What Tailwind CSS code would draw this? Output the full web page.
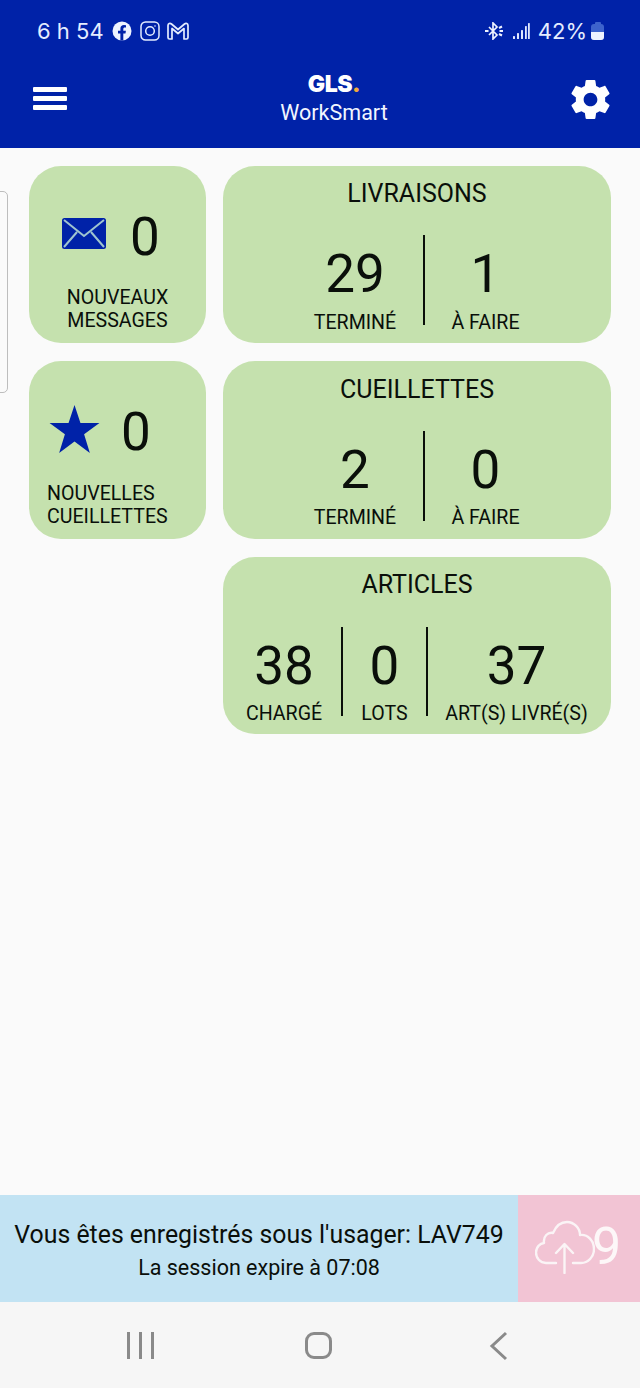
<!DOCTYPE html>
<html lang="fr">
<head>
    <meta charset="UTF-8">
    <meta name="viewport" content="width=device-width, initial-scale=1.0">
    <title>WorkSmart</title>
    <script src="https://cdn.jsdelivr.net/npm/@tailwindcss/browser@4"></script>
</head>
<body class="font-['Roboto',sans-serif] bg-[#fafafa] text-[#0a0f0a]">
<div class="relative flex flex-col w-[640px] h-[1388px] overflow-hidden">

    <!-- barre du haut -->
    <header class="h-[148px] bg-[#0022a8] text-white shrink-0">
        <div class="flex items-center justify-between h-[62px] pl-[37px] pr-[36px]">
            <div class="flex items-center">
                <span class="font-['Inter',sans-serif] text-[22px] leading-none text-[#e4edff] w-[76px]">6 h 54</span>
                <svg class="w-[20px] h-[20px] ml-[-1px]" viewBox="0 0 20 20"><circle cx="10" cy="10" r="9.5" fill="#eef3ff"/><path d="M8.4 19.5v-7H6v-2.7h2.4V7.7c0-2.4 1.4-3.7 3.6-3.7l2 .2v2.3h-1.2c-1.1 0-1.5.7-1.5 1.4v1.900h2.600l-.4 2.700h-2.200v7z" fill="#0022a8"/></svg>
                <svg class="w-[20px] h-[20px] ml-[8px]" viewBox="0 0 20 20" fill="none" stroke="#e4edff" stroke-width="1.500"><rect x="1" y="1" width="18" height="18" rx="4.500"/><circle cx="10" cy="10" r="4.300"/><circle cx="15" cy="5" r=".8" fill="#e4edff" stroke="none"/></svg>
                <svg class="w-[22px] h-[18px] ml-[7px]" viewBox="0 0 22 18" fill="none" stroke="#e4edff" stroke-width="1.700" stroke-linejoin="round"><path d="M1 3.500C1 1.500 3 .8 4.500 2L11 7.500 17.500 2C19 .8 21 1.500 21 3.500V15.500c0 1-.7 1.500-1.500 1.500H17V6.500L11 11.500 5 6.500V17H2.500C1.700 17 1 16.500 1 15.500z"/></svg>
            </div>
            <div class="flex items-center">
                <svg class="w-[18px] h-[18px]" viewBox="0 0 18 18" fill="none" stroke="#eef3ff" stroke-width="1.700"><path d="M4 5l8 8-4 4V1l4 4-8 8"/><path d="M0 9h3.500M14.500 9H18M14 6l3-1.500M14 12l3 1.500" stroke-width="2"/></svg>
                <svg class="w-[17px] h-[18px] ml-[10px]" viewBox="0 0 17 18" fill="#dfe8ff"><rect x="0" y="14" width="2" height="3" rx=".6"/><rect x="4" y="11" width="2" height="6" rx=".6"/><rect x="8" y="8" width="2" height="9" rx=".6"/><rect x="12" y="4" width="1.800" height="13" rx=".6"/><rect x="15" y="1" width="1.800" height="16" rx=".6"/></svg>
                <span class="font-['Inter',sans-serif] text-[22px] leading-none text-[#e4edff] ml-[8px]">42%</span>
                <div class="flex flex-col items-center ml-[4px]">
                    <div class="w-[6px] h-[2px] rounded-t-[1px] bg-[#3d63cc]"></div>
                    <div class="w-[13px] h-[16px] rounded-[3px] bg-[#3d63cc] flex flex-col justify-end overflow-hidden">
                        <div class="h-[8px] bg-[#eef3ff]"></div>
                    </div>
                </div>
            </div>
        </div>
        <div class="relative flex items-center justify-between h-[86px] pl-[33px] pr-[26px]">
            <div class="flex flex-col gap-[4px] w-[34px] pb-[14px]">
                <div class="h-[5px] rounded-[1px] bg-white"></div>
                <div class="h-[5px] rounded-[1px] bg-white"></div>
                <div class="h-[5px] rounded-[1px] bg-white"></div>
            </div>
            <div class="flex flex-col items-center pb-[10px] pl-[34px]">
                <div class="font-['Inter',sans-serif] font-black text-[23px] leading-[22px] tracking-[-0.5px] text-white">GLS<span class="text-[#f2a93b]">.</span></div>
                <div class="text-[21.5px] leading-[30px] mt-[3px] text-[#f2f6ff]">WorkSmart</div>
            </div>
            <svg class="w-[47px] h-[47px] mb-[12px]" viewBox="0 0 24 24" fill="#fff"><path fill-rule="evenodd" d="M19.430 12.980c.04-.32.07-.64.07-.98s-.03-.66-.07-.98l2.110-1.650c.19-.15.240-.42.120-.64l-2-3.460c-.12-.22-.39-.3-.61-.22l-2.490 1c-.52-.4-1.080-.73-1.690-.98l-.38-2.650C14.460 2.180 14.250 2 14 2h-4c-.25 0-.46.180-.49.420l-.38 2.650c-.61.25-1.170.59-1.690.98l-2.490-1c-.23-.09-.49 0-.61.220l-2 3.460c-.13.220-.07.490.12.640l2.110 1.650c-.04.320-.07.650-.07.980s.03.660.07.980l-2.110 1.650c-.19.150-.24.420-.12.640l2 3.460c.12.220.39.300.61.220l2.490-1c.52.400 1.080.730 1.690.980l.38 2.650c.03.240.24.420.49.420h4c.25 0 .46-.180.49-.420l.38-2.650c.61-.250 1.170-.590 1.690-.980l2.490 1c.23.090.49 0 .61-.220l2-3.460c.12-.220.07-.490-.12-.640l-2.110-1.650zM12 15.500c-1.930 0-3.500-1.570-3.500-3.500s1.570-3.500 3.500-3.500 3.500 1.570 3.500 3.500-1.570 3.500-3.500 3.500z"/></svg>
        </div>
    </header>

    <!-- poignee du menu lateral -->
    <div class="absolute left-[-10px] top-[191px] w-[18px] h-[202px] rounded-[5px] border border-[#bdbdbd]"></div>

    <!-- tuiles -->
    <main class="flex-1 flex gap-[17px] pl-[29px] pt-[18px]">
        <div class="flex flex-col gap-[18px] w-[177px]">
            <div class="h-[177px] rounded-[32px] bg-[#c5e1ae] flex flex-col items-center">
                <div class="flex items-center self-start h-[113px] pt-[29px] pl-[33px]">
                    <svg class="w-[44px] h-[31px] mb-[8px]" viewBox="0 0 44 31"><rect width="44" height="31" rx="2.500" fill="#0022a8"/><path d="M2 2l20 16L42 2M2 29l13-15M42 29L29 14" fill="none" stroke="#9fc4cf" stroke-width="2"/></svg>
                    <span class="text-[53px] leading-none ml-[24px]">0</span>
                </div>
                <div class="text-[19.6px] leading-[23px] text-center pt-[7px]">NOUVEAUX<br>MESSAGES</div>
            </div>
            <div class="h-[178px] rounded-[32px] bg-[#c5e1ae] flex flex-col pl-[18px]">
                <div class="flex items-center h-[113px] pt-[29px]">
                    <svg class="w-[51px] h-[48px] ml-[2px] mb-[6px]" viewBox="0 0 52 50"><path d="M26 0l6.200 18.800H52L36 30.500 42 50 26 38 10 50l6-19.500L0 18.800h19.800z" fill="#0022a8"/></svg>
                    <span class="text-[53px] leading-none ml-[21px]">0</span>
                </div>
                <div class="text-[19.6px] leading-[23px] pt-[8px]">NOUVELLES<br>CUEILLETTES</div>
            </div>
        </div>

        <div class="flex flex-col gap-[18px] w-[388px]">
            <div class="h-[177px] rounded-[32px] bg-[#c5e1ae] flex flex-col">
                <div class="text-[25px] leading-[28px] text-center pt-[14px]">LIVRAISONS</div>
                <div class="flex mt-[27px] h-[90px]">
                    <div class="w-[202px] border-r-2 border-[#0a0f0a] flex flex-col items-center pl-[64px]">
                        <span class="text-[53px] leading-[58px] mt-[10px]">29</span>
                        <span class="text-[19.6px] leading-[24px] mt-[8px] whitespace-nowrap">TERMINÉ</span>
                    </div>
                    <div class="flex-1 flex flex-col items-center pr-[65px]">
                        <span class="text-[53px] leading-[58px] mt-[10px]">1</span>
                        <span class="text-[19.6px] leading-[24px] mt-[8px] whitespace-nowrap">À FAIRE</span>
                    </div>
                </div>
            </div>
            <div class="h-[178px] rounded-[32px] bg-[#c5e1ae] flex flex-col">
                <div class="text-[25px] leading-[28px] text-center pt-[15px]">CUEILLETTES</div>
                <div class="flex mt-[27px] h-[90px]">
                    <div class="w-[202px] border-r-2 border-[#0a0f0a] flex flex-col items-center pl-[64px]">
                        <span class="text-[53px] leading-[58px] mt-[10px]">2</span>
                        <span class="text-[19.6px] leading-[24px] mt-[7px] whitespace-nowrap">TERMINÉ</span>
                    </div>
                    <div class="flex-1 flex flex-col items-center pr-[65px]">
                        <span class="text-[53px] leading-[58px] mt-[10px]">0</span>
                        <span class="text-[19.6px] leading-[24px] mt-[7px] whitespace-nowrap">À FAIRE</span>
                    </div>
                </div>
            </div>
            <div class="h-[177px] rounded-[32px] bg-[#c5e1ae] flex flex-col">
                <div class="text-[25px] leading-[28px] text-center pt-[14px]">ARTICLES</div>
                <div class="flex mt-[28px] h-[89px]">
                    <div class="w-[120px] border-r-2 border-[#0a0f0a] flex flex-col items-center pl-[4px]">
                        <span class="text-[53px] leading-[58px] mt-[10px]">38</span>
                        <span class="text-[19.6px] leading-[24px] mt-[7px] whitespace-nowrap">CHARGÉ</span>
                    </div>
                    <div class="w-[85px] border-r-2 border-[#0a0f0a] flex flex-col items-center">
                        <span class="text-[53px] leading-[58px] mt-[10px]">0</span>
                        <span class="text-[19.6px] leading-[24px] mt-[7px] whitespace-nowrap">LOTS</span>
                    </div>
                    <div class="flex-1 flex flex-col items-center pr-[6px]">
                        <span class="text-[53px] leading-[58px] mt-[10px]">37</span>
                        <span class="text-[19.6px] leading-[24px] mt-[7px] whitespace-nowrap">ART(S) LIVRÉ(S)</span>
                    </div>
                </div>
            </div>
        </div>
    </main>

    <!-- session -->
    <div class="flex h-[107px] shrink-0">
        <div class="w-[518px] bg-[#c2e3f3] flex flex-col items-center pt-[23px]">
            <div class="text-[24.85px] leading-[34px]">Vous êtes enregistrés sous l'usager: LAV749</div>
            <div class="text-[21.5px] leading-[28px] mt-[2px]">La session expire à 07:08</div>
        </div>
        <div class="flex-1 bg-[#f2c4d4] flex items-center pl-[17px] pb-[3px] text-white">
            <svg class="w-[60px] h-[54px]" viewBox="0 0 60 54" fill="none" stroke="#fbf4f6" stroke-width="2.400" stroke-linecap="round" stroke-linejoin="round"><path d="M21 43H11C5 43 1 38 1 32.500 1 27 5 23.500 9 23 8 16 13 12 18 13 21 6 26 2 32 2c7 0 13 6 13 13 8-1 14 6 14 14 0 8-6 14-13 14H38"/><path d="M29.500 53V25M21 33l8.500-9 8.500 9"/></svg>
            <span class="text-[52px] leading-none ml-[-3px] text-[#fdf7f8]">9</span>
        </div>
    </div>

    <!-- navigation android -->
    <nav class="relative h-[86px] shrink-0 bg-[#f6f6f6]">
        <div class="absolute left-[127px] top-[30px] flex gap-[9px]">
            <div class="w-[3px] h-[27px] bg-[#8a8a8a]"></div>
            <div class="w-[3px] h-[27px] bg-[#8a8a8a]"></div>
            <div class="w-[3px] h-[27px] bg-[#8a8a8a]"></div>
        </div>
        <div class="absolute left-[305px] top-[30px] w-[27px] h-[27px] rounded-[9px] border-[3px] border-[#8a8a8a]"></div>
        <svg class="absolute left-[489px] top-[29px] w-[20px] h-[30px]" viewBox="0 0 20 30" fill="none" stroke="#8a8a8a" stroke-width="3"><path d="M17 2L3 15l14 13"/></svg>
    </nav>
</div>
</body>
</html>
